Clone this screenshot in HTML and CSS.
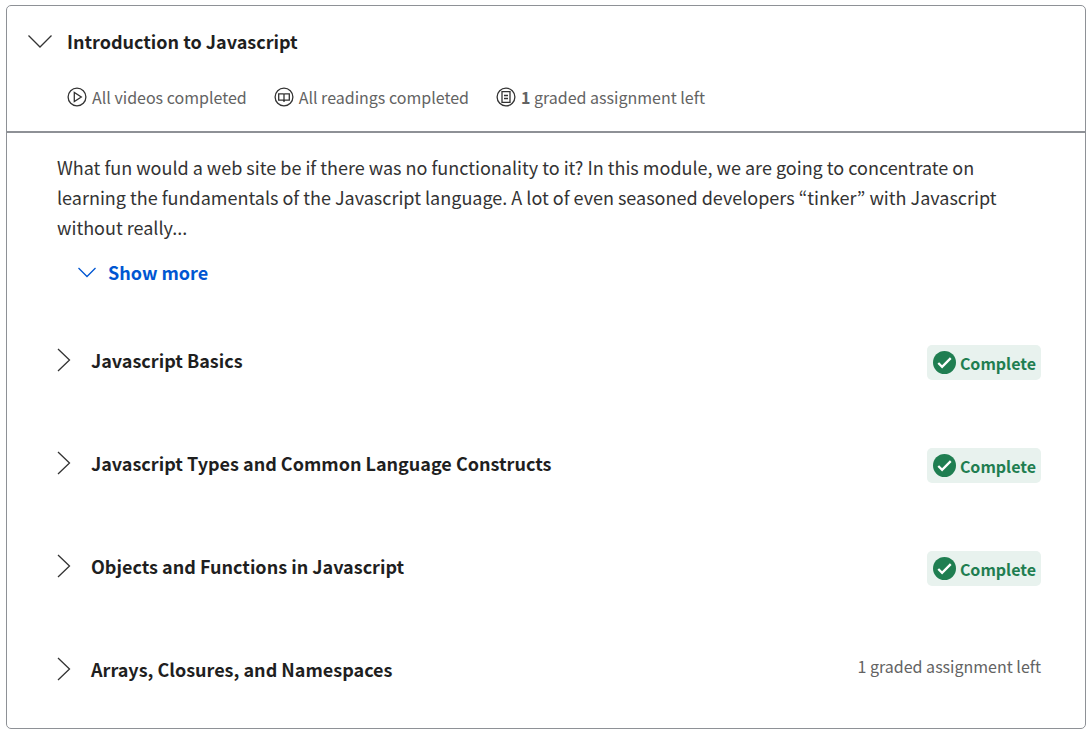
FILE: index.html
```html
<!DOCTYPE html>
<html lang="en">
<head>
<meta charset="utf-8">
<meta name="viewport" content="width=device-width, initial-scale=1">
<title>Introduction to Javascript</title>
<link rel="stylesheet" href="styles.css">
</head>
<body>
<svg class="defs" aria-hidden="true">
  <symbol id="right" viewBox="0 0 14 24"><path d="M1 1 12.500 12 1 23" fill="none" stroke="currentColor" stroke-width="1.300"/></symbol>
  <symbol id="check" viewBox="0 0 24 24"><circle cx="12" cy="12" r="12" fill="#1f7e51"/><path d="m5.500 12.500 4 4 9-9" fill="none" stroke="#fff" stroke-width="2.400"/></symbol>
</svg>
<main class="module">
  <header class="module-header">
    <h2 class="heading">
      <button class="toggle module-toggle" type="button" aria-expanded="true">
        <svg class="icon-down" viewBox="0 0 24 14" aria-hidden="true"><path d="M.5 1.500 12 13 23.500 1.500" fill="none" stroke="currentColor" stroke-width="1.300"/></svg>
        <span>Introduction to Javascript</span>
      </button>
    </h2>
    <ul class="progress">
      <li class="progress-item">
        <svg class="icon-progress" viewBox="0 0 20 20" fill="none" stroke="currentColor" stroke-width="1.300" aria-hidden="true"><circle cx="10" cy="10" r="8.900"/><path d="M7.300 5.500v9l7-4.500z"/></svg>
        <span>All videos completed</span>
      </li>
      <li class="progress-item">
        <svg class="icon-progress" viewBox="0 0 20 20" fill="none" stroke="currentColor" stroke-width="1.300" aria-hidden="true"><circle cx="10" cy="10" r="8.900"/><path d="M10 7.400 9.300 6.800H4.700v6.400h4.600l.7.600.7-.6h4.600V6.800h-4.600zM10 7.400v7.600"/></svg>
        <span>All readings completed</span>
      </li>
      <li class="progress-item">
        <svg class="icon-progress" viewBox="0 0 20 20" fill="none" stroke="currentColor" stroke-width="1.300" aria-hidden="true"><circle cx="10" cy="10" r="8.900"/><path d="M6 4.600h8v10.800H6zM8 8.500h4M8 11.500h4"/></svg>
        <span><b>1</b> graded assignment left</span>
      </li>
    </ul>
  </header>
  <div class="module-body">
    <p class="description">What fun would a web site be if there was no functionality to it? In this module, we are going to concentrate on learning the fundamentals of the Javascript language. A lot of even seasoned developers “tinker” with Javascript without really...</p>
    <button class="toggle show-more" type="button">
      <svg class="icon-more" viewBox="0 0 18 11" aria-hidden="true"><path d="M.5 1 9 9.500 17.500 1" fill="none" stroke="currentColor" stroke-width="1.300"/></svg>
      <span>Show more</span>
    </button>
    <ul class="lessons">
      <li class="lesson">
        <h3 class="heading"><button class="toggle lesson-toggle" type="button" aria-expanded="false"><svg class="icon-right" aria-hidden="true"><use href="#right"/></svg><span>Javascript Basics</span></button></h3>
        <span class="badge"><svg class="icon-check" aria-hidden="true"><use href="#check"/></svg><span>Complete</span></span>
      </li>
      <li class="lesson">
        <h3 class="heading"><button class="toggle lesson-toggle" type="button" aria-expanded="false"><svg class="icon-right" aria-hidden="true"><use href="#right"/></svg><span>Javascript Types and Common Language Constructs</span></button></h3>
        <span class="badge"><svg class="icon-check" aria-hidden="true"><use href="#check"/></svg><span>Complete</span></span>
      </li>
      <li class="lesson">
        <h3 class="heading"><button class="toggle lesson-toggle" type="button" aria-expanded="false"><svg class="icon-right" aria-hidden="true"><use href="#right"/></svg><span>Objects and Functions in Javascript</span></button></h3>
        <span class="badge"><svg class="icon-check" aria-hidden="true"><use href="#check"/></svg><span>Complete</span></span>
      </li>
      <li class="lesson">
        <h3 class="heading"><button class="toggle lesson-toggle" type="button" aria-expanded="false"><svg class="icon-right" aria-hidden="true"><use href="#right"/></svg><span>Arrays, Closures, and Namespaces</span></button></h3>
        <span class="remaining">1 graded assignment left</span>
      </li>
    </ul>
  </div>
</main>
</body>
</html>
```
FILE: styles.css
```css
* { box-sizing: border-box; }
body {
  margin: 5px 5px 5px 6px;
  background: #fff;
  color: #1f1f1f;
  font-family: "Source Sans Pro", "Noto Sans CJK KR", sans-serif;
  font-size: 18px;
  line-height: 30px;
}
svg { flex: none; display: block; }
ul, p { margin: 0; padding: 0; list-style: none; }
.defs { position: absolute; width: 0; height: 0; }
.module { border: 1px solid #8e9196; border-radius: 5px; }
.module-header { padding: 20px 21px 19px; border-bottom: 2px solid #8e9196; }
.heading { margin: 0; font-size: 18px; line-height: 30px; }
.toggle {
  display: flex;
  align-items: center;
  padding: 0;
  border: 0;
  background: none;
  color: inherit;
  font: inherit;
  font-weight: 700;
  text-align: left;
  cursor: pointer;
}
.module-toggle { gap: 15px; }
.progress { display: flex; flex-wrap: wrap; gap: 27px; margin: 26px 0 0 39px; }
.progress-item { display: flex; align-items: center; gap: 5px; color: #636363; font-size: 16px; }
.icon-down { width: 24px; height: 14px; color: #333; }
.icon-progress { width: 20px; height: 20px; color: #333; }
.module-body { padding: 19px 44px 5px 50px; }
.description { color: #333; }
.show-more { gap: 12px; margin: 15px 0 0 21px; color: #0056d2; }
.icon-more { width: 18px; height: 11px; }
.lessons { margin-top: 24px; }
.lesson {
  display: flex;
  align-items: flex-start;
  justify-content: space-between;
  gap: 20px;
  padding: 34px 0;
  min-height: 103px;
}
.lesson-toggle { gap: 20px; }
.icon-right { width: 14px; height: 24px; color: #333; }
.badge {
  display: flex;
  align-items: center;
  gap: 4px;
  height: 35px;
  padding: 0 5px 0 6px;
  border-radius: 5px;
  background: #e8f2ee;
  color: #1f7e51;
  font-size: 16px;
  font-weight: 700;
}
.icon-check { width: 23px; height: 23px; }
.remaining { color: #636363; font-size: 16px; line-height: 24px; }
```
